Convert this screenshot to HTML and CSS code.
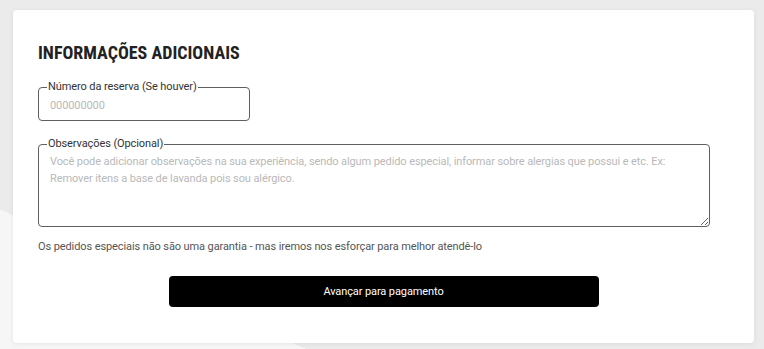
FILE: index.html
```html
<!DOCTYPE html>
<html lang="pt-BR">
<head>
    <meta charset="UTF-8">
    <meta name="viewport" content="width=device-width, initial-scale=1.0">
    <title>Informações adicionais</title>
    <link rel="stylesheet" href="styles.css">
</head>
<body>
    <div class="card">
        <h2 class="card-title">INFORMAÇÕES ADICIONAIS</h2>

        <form class="extra-form">
            <fieldset class="field field-short">
                <legend>Número da reserva (Se houver)</legend>
                <input type="text" class="field-input" placeholder="000000000">
            </fieldset>

            <fieldset class="field field-wide">
                <legend>Observações (Opcional)</legend>
                <textarea class="field-area" placeholder="Você pode adicionar observações na sua experiência, sendo algum pedido especial, informar sobre alergias que possui e etc. Ex: Remover itens a base de lavanda pois sou alérgico."></textarea>
            </fieldset>

            <p class="hint">Os pedidos especiais não são uma garantia - mas iremos nos esforçar para melhor atendê-lo</p>

            <div class="actions">
                <button type="button" class="btn-next">Avançar para pagamento</button>
            </div>
        </form>
    </div>
</body>
</html>
```

FILE: styles.css
```css
:root {
    --page-bg: #ebebeb;
    --page-bg-light: #f6f6f6;
    --card-bg: #ffffff;
    --title-color: #222222;
    --label-color: #333333;
    --border-color: #5f5f5f;
    --placeholder: #b9b9b9;
    --hint-color: #555555;
}

* {
    box-sizing: border-box;
}

body {
    margin: 0;
    padding: 10px 10px 6px 13px;
    min-height: 349px;
    font-family: Roboto, 'Liberation Sans', sans-serif;
    letter-spacing: -0.1px;
    background: linear-gradient(to top right, var(--page-bg-light) 0 20%, var(--page-bg) 20%);
}

.card {
    width: 741px;
    height: 333px;
    padding: 32px 25px 36px;
    background-color: var(--card-bg);
    border-radius: 4px;
    box-shadow: 0 1px 5px rgba(0, 0, 0, 0.07);
}

.card-title {
    margin: 0 0 16px;
    font-size: 18px;
    line-height: 22px;
    font-weight: 700;
    font-stretch: 75%;
    letter-spacing: 0;
    color: var(--title-color);
}

.extra-form {
    display: flex;
    flex-direction: column;
    width: 672px;
}

.field {
    margin: 0;
    padding: 0;
    border: 1px solid var(--border-color);
    border-radius: 4px;
    min-width: 0;
}

.field legend {
    margin-left: 8px;
    padding: 0 1px;
    font-size: 11px;
    line-height: 14px;
    color: var(--label-color);
}

.field-short {
    width: 212px;
}

.field-wide {
    margin-top: 16px;
}

.field-input,
.field-area {
    display: block;
    width: 100%;
    border: none;
    outline: none;
    background: transparent;
    font-family: inherit;
    font-size: 11px;
    letter-spacing: inherit;
    color: var(--label-color);
}

.field-input {
    padding: 5px 11px 7px;
    line-height: 14px;
}

.field-area {
    height: 75px;
    padding: 2px 11px 0;
    line-height: 17px;
    resize: both;
}

.field-input::placeholder,
.field-area::placeholder {
    color: var(--placeholder);
}

.hint {
    margin: 13px 0 0;
    font-size: 11px;
    line-height: 14px;
    color: var(--hint-color);
}

.actions {
    display: flex;
    justify-content: center;
    margin-top: 22px;
    padding-left: 19px;
}

.btn-next {
    width: 430px;
    height: 31px;
    border: none;
    border-radius: 4px;
    background-color: #000000;
    color: #ffffff;
    font-family: inherit;
    font-size: 11px;
    font-weight: 400;
    letter-spacing: inherit;
    cursor: pointer;
}
```
